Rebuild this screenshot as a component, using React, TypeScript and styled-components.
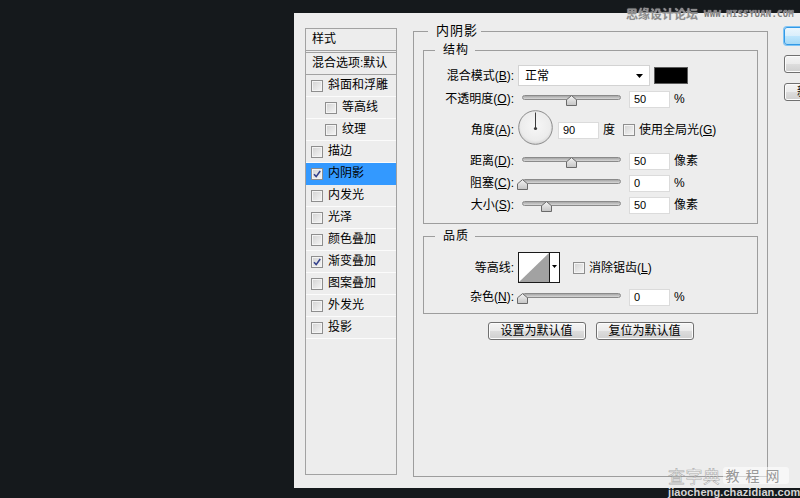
import React from 'react';
import styled, { createGlobalStyle } from 'styled-components';

const GlobalStyle = createGlobalStyle`
  html, body {
    margin: 0;
    padding: 0;
    background: #15191c;
  }
  body {
    font-family: "Liberation Sans", "Noto Sans CJK SC", sans-serif;
    font-size: 12px;
    color: #000;
  }
`;

const Screen = styled.div`
  position: relative;
  width: 800px;
  height: 498px;
  overflow: hidden;
  background: #15191c;
  box-sizing: border-box;
  padding: 13px 0 0 294px;
  display: flex;
  align-items: flex-start;
`;

const Dialog = styled.div`
  flex: 1;
  min-width: 0;
  height: 475px;
  background: #ededed;
  display: flex;
  align-items: flex-start;
  padding-left: 11px;
  overflow: hidden;
`;

/* ---------- left style list ---------- */

const StyleList = styled.div`
  flex-shrink: 0;
  width: 92px;
  height: 447px;
  margin-top: 15px;
  box-sizing: border-box;
  border: 1px solid #a2a2a2;
  display: flex;
  flex-direction: column;
  line-height: 21px;
`;

const ListHeader = styled.div`
  height: 21px;
  padding-left: 6px;
  border-bottom: 1px solid #a2a2a2;
  margin-bottom: 1px;
`;

const BlendRow = styled(ListHeader)`
  border-top: 1px solid #a2a2a2;
  margin-bottom: 0;
`;

const ListItem = styled.div<{ $indent?: boolean; $active?: boolean }>`
  height: 21px;
  display: flex;
  align-items: center;
  gap: 5px;
  padding-left: ${(p) => (p.$indent ? 19 : 5)}px;
  border-bottom: 1px solid ${(p) => (p.$active ? '#3399ff' : '#fbfbfb')};
  background: ${(p) => (p.$active ? '#3399ff' : 'transparent')};
  white-space: nowrap;
`;

const CheckBox = styled.span`
  flex-shrink: 0;
  width: 12px;
  height: 12px;
  box-sizing: border-box;
  border: 1px solid #8e8e8e;
  box-shadow: inset 0 0 0 1px #f4f4f4;
  background: linear-gradient(135deg, #d2d2d2, #f6f6f6);
  display: inline-flex;
  align-items: center;
  justify-content: center;
`;

const Check: React.FC<{ checked?: boolean }> = ({ checked }) => (
  <CheckBox>
    {checked && (
      <svg width="10" height="10" viewBox="0 0 10 10">
        <path d="M2 5.2 L4.2 7.6 L8.2 2" fill="none" stroke="#34418c" strokeWidth="1.6" />
      </svg>
    )}
  </CheckBox>
);

/* ---------- main panel ---------- */

const MainPanel = styled.fieldset`
  flex-shrink: 0;
  width: 355px;
  height: 453px;
  margin: 11px 0 0 16px;
  box-sizing: border-box;
  border: 1px solid #9d9d9d;
  padding: 5px 9px 0;
  display: flex;
  flex-direction: column;
  gap: 5px;
`;

const MainLegend = styled.legend`
  margin-left: 5px;
  padding: 0 3px 0 8px;
  font-size: 13px;
  line-height: 14px;
  letter-spacing: 1px;
`;

const GroupLegend = styled.legend`
  margin-left: 11px;
  padding: 0 6px 0 8px;
  font-size: 12px;
  line-height: 14px;
  letter-spacing: 1px;
`;

const StructureGroup = styled.fieldset`
  margin: 0;
  border: 1px solid #9d9d9d;
  padding: 8px 0 9px;
  display: flex;
  flex-direction: column;
  gap: 4px;
`;

const QualityGroup = styled(StructureGroup)`
  padding: 9px 0 7px;
  gap: 5px;
`;

const Row = styled.div<{ $h?: number }>`
  display: flex;
  align-items: center;
  height: ${(p) => p.$h ?? 18}px;
  white-space: nowrap;
  line-height: 14px;
`;

const Label = styled.span`
  flex-shrink: 0;
  width: 90px;
  text-align: right;
`;

const Key = styled.span`
  text-decoration: underline;
`;

const Select = styled.div`
  flex-shrink: 0;
  width: 132px;
  height: 21px;
  margin-left: 4px;
  box-sizing: border-box;
  background: #fff;
  border: 1px solid #d3d3d3;
  padding: 0 6px;
  display: flex;
  align-items: center;
  justify-content: space-between;
`;

const Swatch = styled.div`
  flex-shrink: 0;
  width: 34px;
  height: 17px;
  margin-left: 4px;
  box-sizing: border-box;
  border: 1px solid #5c5c5c;
  background: #000;
`;

const SliderBox = styled.div`
  position: relative;
  flex-shrink: 0;
  width: 107px;
  height: 18px;
  margin-left: 4px;
`;

const Track = styled.div`
  margin: 5px 4px 0;
  height: 5px;
  box-sizing: border-box;
  border: 1px solid #8a8a8a;
  border-radius: 3px;
  background: linear-gradient(#a6a6a6, #d8d8d8);
`;

const Thumb = styled.svg`
  position: absolute;
  top: 5px;
`;

const Slider: React.FC<{ value: number }> = ({ value }) => (
  <SliderBox>
    <Track />
    <Thumb width="11" height="11" viewBox="0 0 11 11" style={{ left: 4 + value * 99 - 5.5 }}>
      <defs>
        <linearGradient id="thumbFill" x1="0" y1="0" x2="0" y2="1">
          <stop offset="0" stopColor="#f4f4f4" />
          <stop offset="1" stopColor="#c4c4c4" />
        </linearGradient>
      </defs>
      <polygon points="0.5,10.5 0.5,4.8 5.5,0.6 10.5,4.8 10.5,10.5" fill="url(#thumbFill)" stroke="#6a6a6a" />
    </Thumb>
  </SliderBox>
);

const NumberBox = styled.div<{ $gap?: number }>`
  flex-shrink: 0;
  width: 41px;
  height: 17px;
  margin-left: ${(p) => p.$gap ?? 4}px;
  box-sizing: border-box;
  background: #fff;
  border: 1px solid #dbdbdb;
  padding-left: 4px;
  font: 11px/15px "Liberation Sans", sans-serif;
`;

const Unit = styled.span`
  margin-left: 4px;
`;

const Dial = styled.svg`
  flex-shrink: 0;
  margin: -5px 0 0 4px;
`;

const InlineCheck = styled.span<{ $gap: number }>`
  display: inline-flex;
  align-items: center;
  gap: 4px;
  margin-left: ${(p) => p.$gap}px;
`;

const Contour = styled.svg`
  flex-shrink: 0;
  margin-left: 4px;
`;

const ButtonRow = styled.div`
  display: flex;
  justify-content: center;
  gap: 10px;
  margin-top: 3px;
`;

const Button = styled.div<{ $primary?: boolean }>`
  flex-shrink: 0;
  width: 98px;
  height: 18px;
  box-sizing: border-box;
  border: 1px solid ${(p) => (p.$primary ? '#3399e6' : '#707070')};
  border-radius: 3px;
  background: ${(p) =>
    p.$primary
      ? 'linear-gradient(#eaf6fd 0%, #d9eefb 50%, #bee6fd 51%, #a7d9f5 100%)'
      : 'linear-gradient(#f4f4f4 0%, #ebebeb 50%, #dddddd 51%, #cfcfcf 100%)'};
  box-shadow: ${(p) => (p.$primary ? '0 0 0 1px #7ec4f5' : 'inset 0 0 0 1px #fcfcfc')};
  display: flex;
  align-items: center;
  justify-content: center;
  line-height: 14px;
  white-space: nowrap;
`;

const SideColumn = styled.div`
  flex-shrink: 0;
  width: 80px;
  margin: 14px 0 0 16px;
  display: flex;
  flex-direction: column;
  gap: 10px;
`;

const SideButton = styled(Button)<{ $indent?: number }>`
  width: 80px;
  justify-content: flex-start;
  padding-left: ${(p) => p.$indent ?? 24}px;
`;

/* ---------- watermarks ---------- */

const TopMark = styled.div`
  position: absolute;
  left: 626px;
  top: 7px;
  display: flex;
  align-items: center;
  gap: 6px;
  white-space: nowrap;
`;

const TopMarkCn = styled.span`
  font: bold 12px/14px "Noto Sans CJK SC", sans-serif;
  color: #8e8e8e;
  text-shadow: 0 0 1px #dcdcdc;
`;

const TopMarkEn = styled.span`
  font: bold 9px/12px "DejaVu Sans Mono", monospace;
  color: #7c7c7c;
  text-shadow: 0 0 1px #fff;
  letter-spacing: 0.2px;
`;

const BottomMark = styled.div`
  position: absolute;
  left: 668px;
  top: 466px;
  display: flex;
  flex-direction: column;
  gap: 2px;
`;

const BottomMarkTop = styled.div`
  display: flex;
  align-items: center;
  gap: 2px;
  height: 19px;
`;

const MarkBig = styled.span`
  font: 17px/19px "Noto Sans CJK SC", sans-serif;
  color: rgba(255, 255, 255, 0.55);
  -webkit-text-stroke: 0.6px rgba(120, 120, 120, 0.6);
  letter-spacing: 0.5px;
`;

const MarkBox = styled.span`
  width: 66px;
  height: 17px;
  border-radius: 3px;
  background: rgba(255, 255, 255, 0.55);
  color: rgba(140, 140, 140, 0.9);
  font: 14px/17px "Noto Sans CJK SC", sans-serif;
  text-align: center;
  letter-spacing: 6px;
`;

const MarkUrl = styled.span`
  font: bold 11px/11px "Liberation Sans", sans-serif;
  color: #d4d4d4;
  letter-spacing: 0.1px;
`;

const styleItems: { name: string; indent?: boolean; checked?: boolean; active?: boolean }[] = [
  { name: '斜面和浮雕' },
  { name: '等高线', indent: true },
  { name: '纹理', indent: true },
  { name: '描边' },
  { name: '内阴影', checked: true, active: true },
  { name: '内发光' },
  { name: '光泽' },
  { name: '颜色叠加' },
  { name: '渐变叠加', checked: true },
  { name: '图案叠加' },
  { name: '外发光' },
  { name: '投影' },
];

const label = (text: string, key: string) => (
  <Label>
    {text}(<Key>{key}</Key>):
  </Label>
);

export default function App() {
  return (
    <Screen>
      <GlobalStyle />
      <Dialog>
        <StyleList>
          <ListHeader>样式</ListHeader>
          <BlendRow>混合选项:默认</BlendRow>
          {styleItems.map((item) => (
            <ListItem key={item.name} $indent={item.indent} $active={item.active}>
              <Check checked={item.checked} />
              {item.name}
            </ListItem>
          ))}
        </StyleList>

        <MainPanel>
          <MainLegend>内阴影</MainLegend>
          <StructureGroup>
            <GroupLegend>结构</GroupLegend>
            <Row $h={21}>
              {label('混合模式', 'B')}
              <Select>
                正常
                <svg width="7" height="4" viewBox="0 0 7 4">
                  <polygon points="0,0 7,0 3.5,4" fill="#000" />
                </svg>
              </Select>
              <Swatch />
            </Row>
            <Row>
              {label('不透明度', 'O')}
              <Slider value={0.5} />
              <NumberBox>50</NumberBox>
              <Unit>%</Unit>
            </Row>
            <Row $h={36}>
              {label('角度', 'A')}
              <Dial width="35" height="35" viewBox="0 0 35 35">
                <defs>
                  <radialGradient id="dialFill" cx="0.5" cy="0.45" r="0.55">
                    <stop offset="0" stopColor="#f7f7f7" />
                    <stop offset="0.8" stopColor="#ececec" />
                    <stop offset="1" stopColor="#d6d6d6" />
                  </radialGradient>
                </defs>
                <circle cx="17.5" cy="17.5" r="16.8" fill="url(#dialFill)" stroke="#8c8c8c" />
                <line x1="17.5" y1="18" x2="17.5" y2="2.5" stroke="#3c3c3c" strokeWidth="1" />
                <circle cx="17.5" cy="18.5" r="1.6" fill="#3c3c3c" />
              </Dial>
              <NumberBox $gap={5}>90</NumberBox>
              <Unit>度</Unit>
              <InlineCheck $gap={8}>
                <Check />
                <span>
                  使用全局光(<Key>G</Key>)
                </span>
              </InlineCheck>
            </Row>
            <Row>
              {label('距离', 'D')}
              <Slider value={0.5} />
              <NumberBox>50</NumberBox>
              <Unit>像素</Unit>
            </Row>
            <Row>
              {label('阻塞', 'C')}
              <Slider value={0} />
              <NumberBox>0</NumberBox>
              <Unit>%</Unit>
            </Row>
            <Row>
              {label('大小', 'S')}
              <Slider value={0.25} />
              <NumberBox>50</NumberBox>
              <Unit>像素</Unit>
            </Row>
          </StructureGroup>

          <QualityGroup>
            <GroupLegend>品质</GroupLegend>
            <Row $h={31}>
              <Label>等高线:</Label>
              <Contour width="42" height="31" viewBox="0 0 42 31">
                <rect x="0.5" y="0.5" width="41" height="30" fill="#fff" stroke="#1a1a1a" />
                <polygon points="1,30 31,1 31,30" fill="#a2a2a2" />
                <line x1="31.5" y1="0.5" x2="31.5" y2="30.5" stroke="#1a1a1a" />
                <polygon points="34,13 39,13 36.5,16" fill="#000" />
              </Contour>
              <InlineCheck $gap={13}>
                <Check />
                <span>
                  消除锯齿(<Key>L</Key>)
                </span>
              </InlineCheck>
            </Row>
            <Row>
              {label('杂色', 'N')}
              <Slider value={0} />
              <NumberBox>0</NumberBox>
              <Unit>%</Unit>
            </Row>
          </QualityGroup>

          <ButtonRow>
            <Button>设置为默认值</Button>
            <Button>复位为默认值</Button>
          </ButtonRow>
        </MainPanel>

        <SideColumn>
          <SideButton $primary>确定</SideButton>
          <SideButton>复位</SideButton>
          <SideButton $indent={12}>新建样式(W)...</SideButton>
        </SideColumn>
      </Dialog>

      <TopMark>
        <TopMarkCn>思缘设计论坛</TopMarkCn>
        <TopMarkEn>WWW.MISSYUAN.COM</TopMarkEn>
      </TopMark>

      <BottomMark>
        <BottomMarkTop>
          <MarkBig>查字典</MarkBig>
          <MarkBox>教程网</MarkBox>
        </BottomMarkTop>
        <MarkUrl>jiaocheng.chazidian.com</MarkUrl>
      </BottomMark>
    </Screen>
  );
}
